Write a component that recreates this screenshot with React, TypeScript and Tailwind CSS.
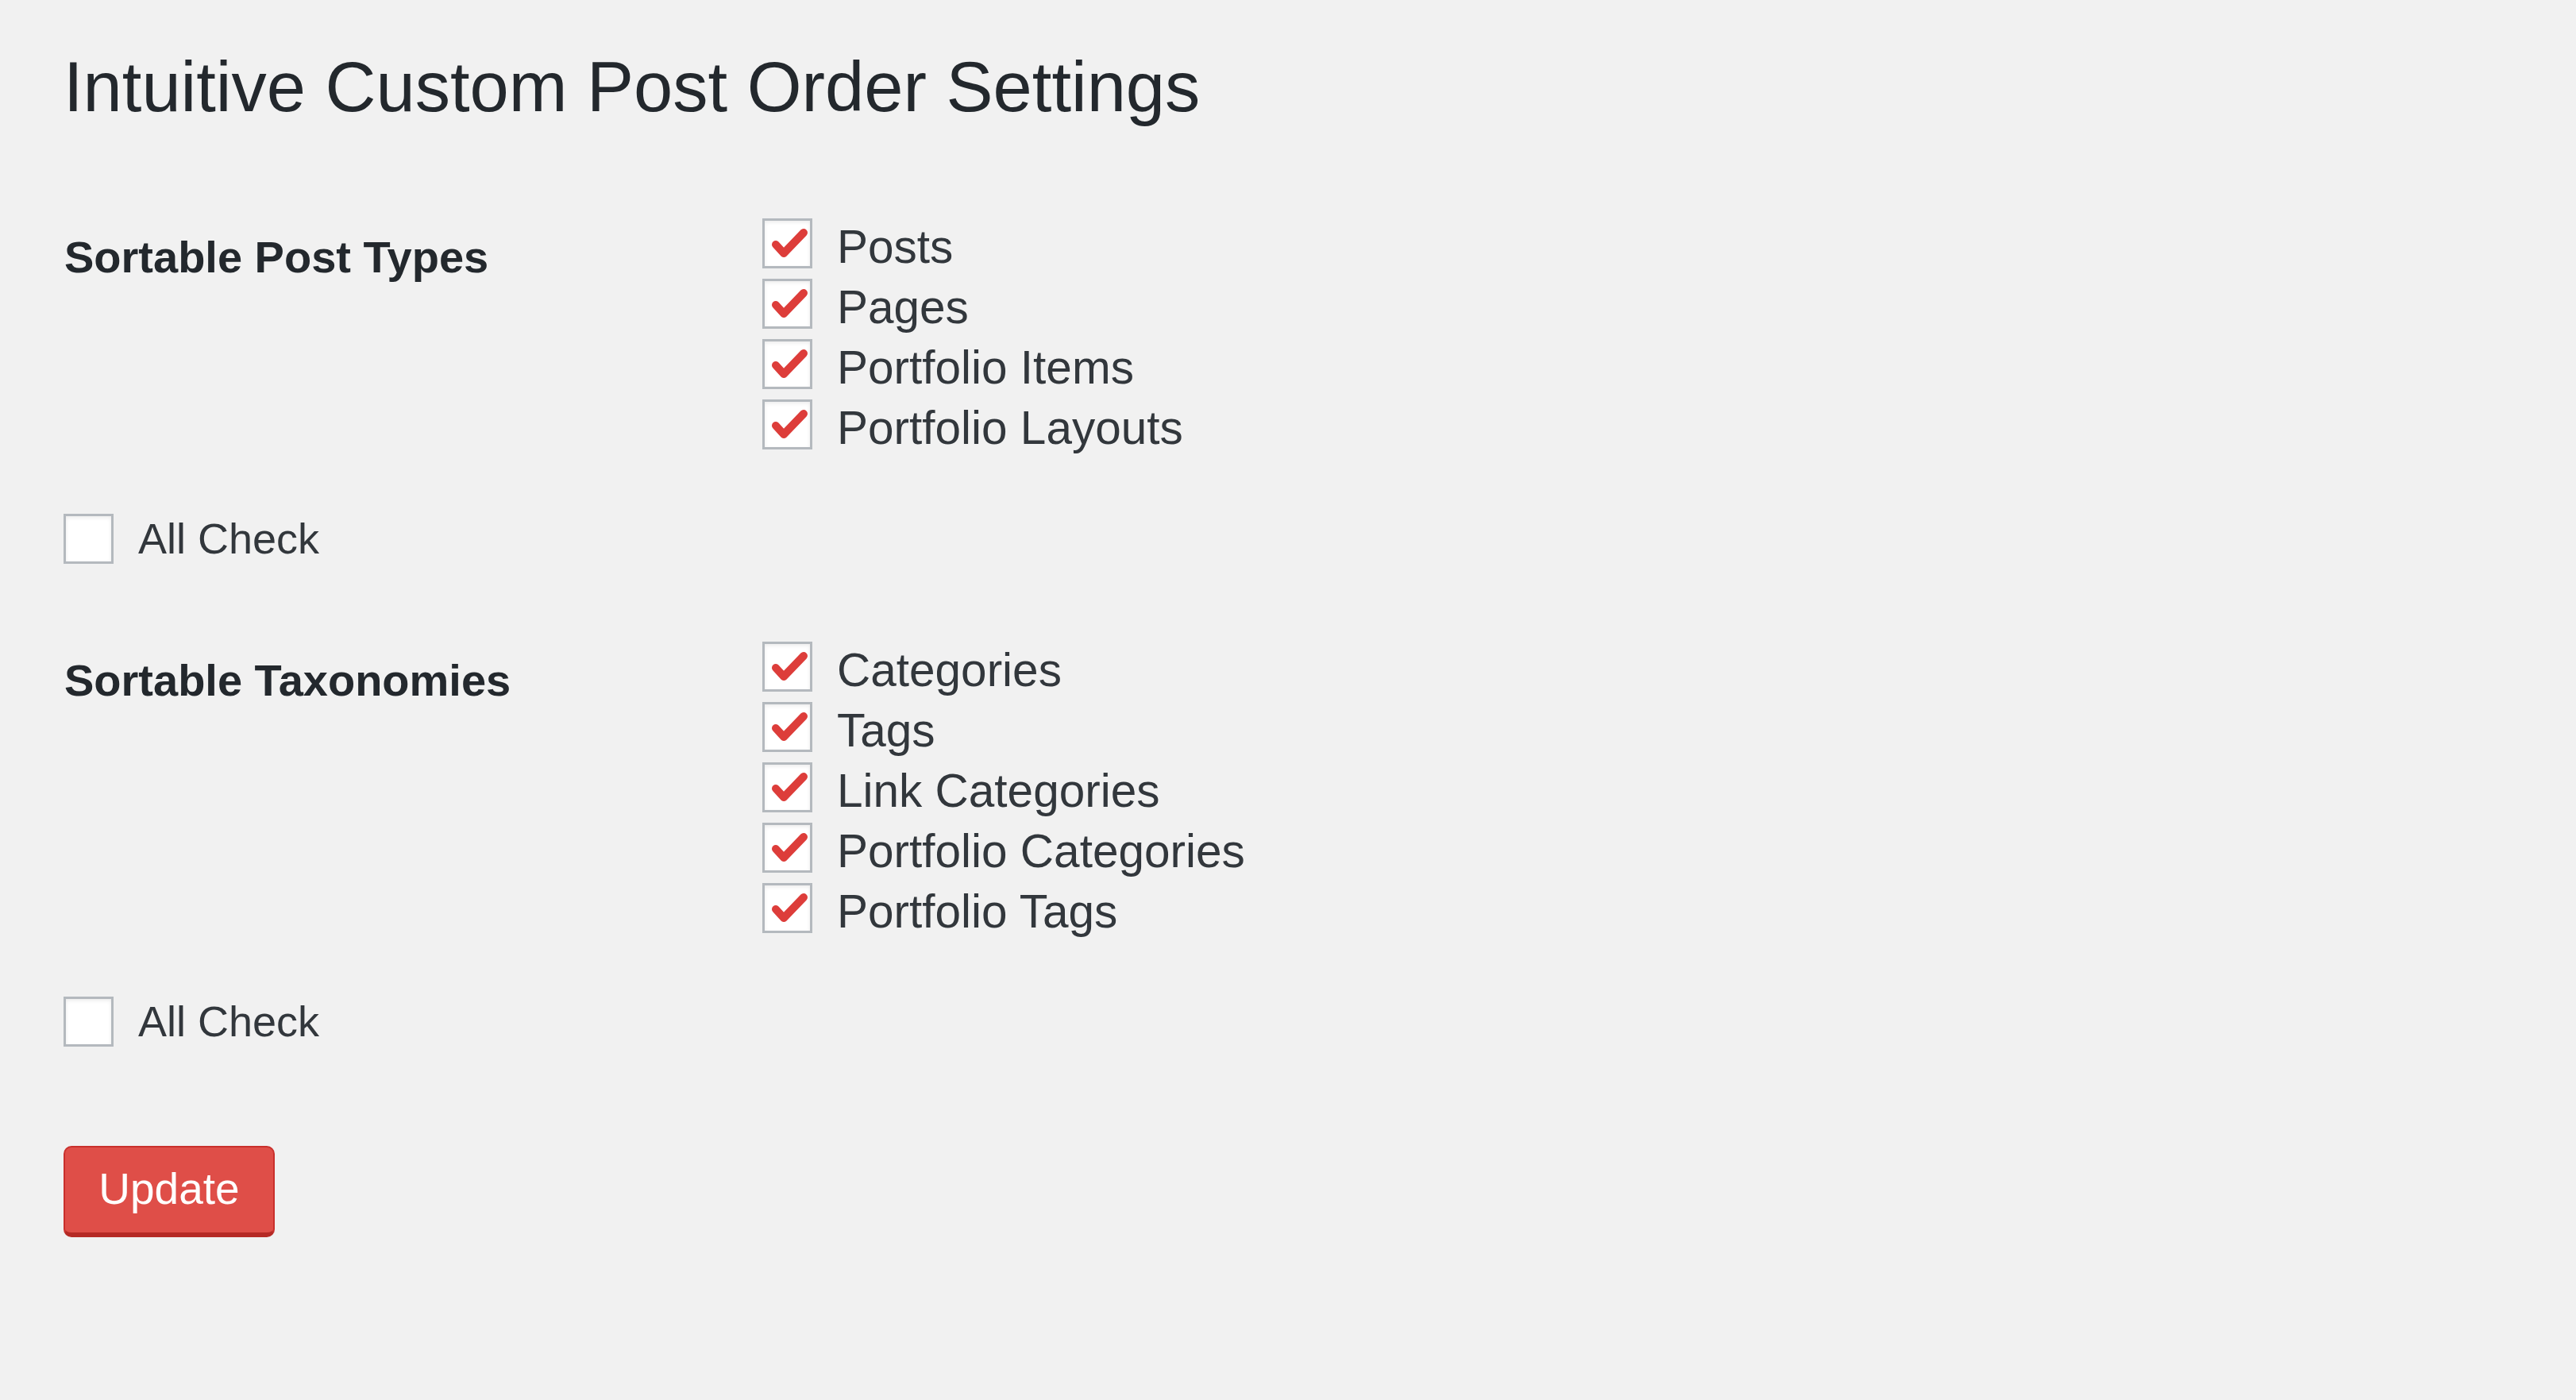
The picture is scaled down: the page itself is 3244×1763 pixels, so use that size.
const postTypes = ["Posts", "Pages", "Portfolio Items", "Portfolio Layouts"];
const taxonomies = ["Categories", "Tags", "Link Categories", "Portfolio Categories", "Portfolio Tags"];

function CheckBox({ checked }: { checked: boolean }) {
  return (
    <span className="relative flex h-[63px] w-[63px] shrink-0 items-center justify-center border-[3px] border-[#b4b9be] bg-white shadow-[inset_0_2px_5px_rgba(0,0,0,0.08)]">
      {checked && (
        <svg width="63" height="63" viewBox="0 0 63 63" className="absolute -left-[3px] -top-[3px]">
          <polyline
            points="17,33 27,44 52,18"
            fill="none"
            stroke="#dd3d3a"
            strokeWidth="10"
            strokeLinecap="round"
            strokeLinejoin="round"
          />
        </svg>
      )}
    </span>
  );
}

function CheckRow({ label, checked, small }: { label: string; checked: boolean; small?: boolean }) {
  return (
    <label className="flex h-[76px] items-start">
      <CheckBox checked={checked} />
      <span
        className={`ml-[31px] leading-[63px] text-[#32373c] ${small ? "mt-0 text-[54px]" : "mt-[4px] text-[58.5px]"}`}
      >
        {label}
      </span>
    </label>
  );
}

function Section({ title, items }: { title: string; items: string[] }) {
  return (
    <div className="grid grid-cols-[880px_1fr]">
      <h2 className="mt-[17px] pl-[1px] text-[56px] font-bold leading-[63px] text-[#23282d]">{title}</h2>
      <div className="flex flex-col">
        {items.map((item) => (
          <CheckRow key={item} label={item} checked />
        ))}
      </div>
    </div>
  );
}

export default function App() {
  return (
    <main className="min-h-screen bg-[#f1f1f1] pl-[80px] pt-[60px] font-['Liberation_Sans',Arial,sans-serif]">
      <h1 className="text-[88.5px] font-normal leading-[100px] text-[#23282d]">
        Intuitive Custom Post Order Settings
      </h1>

      <div className="mt-[115px]">
        <Section title="Sortable Post Types" items={postTypes} />
      </div>

      <div className="mt-[68px]">
        <CheckRow label="All Check" checked={false} small />
      </div>

      <div className="mt-[85px]">
        <Section title="Sortable Taxonomies" items={taxonomies} />
      </div>

      <div className="mt-[67px]">
        <CheckRow label="All Check" checked={false} small />
      </div>

      <button className="mt-[112px] flex h-[115px] w-[266px] items-center justify-center rounded-[10px] border-2 border-b-[6px] border-[#c9302c] border-b-[#b52a25] bg-[#df4e48] pb-[2px] text-[55px] leading-none text-white">
        Update
      </button>
    </main>
  );
}
